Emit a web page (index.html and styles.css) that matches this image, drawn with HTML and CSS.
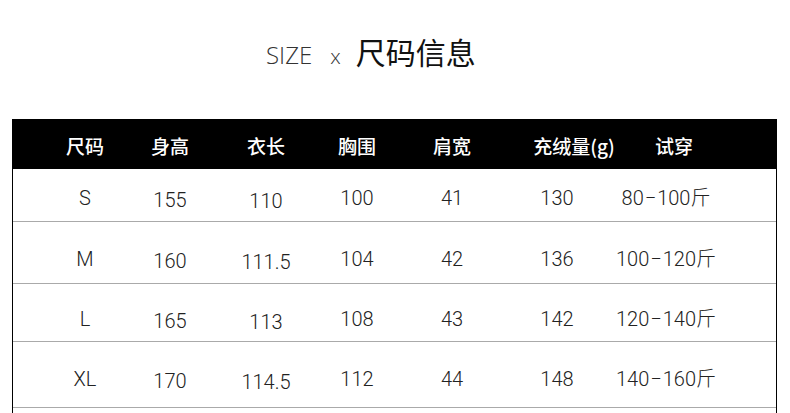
FILE: index.html
```html
<!DOCTYPE html>
<html lang="zh">
<head>
<meta charset="utf-8">
<link rel="stylesheet" href="styles.css">
</head>
<body>
<div class="title">
  <span class="t-en">SIZE</span>
  <span class="t-x">x</span>
  <span class="t-cn">尺码信息</span>
</div>
<div class="table">
  <div class="head grid">
    <div>尺码</div>
    <div>身高</div>
    <div>衣长</div>
    <div>胸围</div>
    <div>肩宽</div>
    <div class="h6">充绒量(g)</div>
    <div class="h7">试穿</div>
  </div>
  <div class="body">
    <div class="row grid r1">
      <div>S</div><div class="c2">155</div><div class="c3">110</div><div class="c4">100</div><div>41</div><div>130</div><div>80<span class="dash">−</span>100斤</div>
    </div>
    <div class="row grid r2">
      <div>M</div><div class="c2">160</div><div class="c3">111.5</div><div class="c4">104</div><div>42</div><div>136</div><div>100<span class="dash">−</span>120斤</div>
    </div>
    <div class="row grid r3">
      <div>L</div><div class="c2">165</div><div class="c3">113</div><div class="c4">108</div><div>43</div><div>142</div><div>120<span class="dash">−</span>140斤</div>
    </div>
    <div class="row grid r4">
      <div>XL</div><div class="c2">170</div><div class="c3">114.5</div><div class="c4">112</div><div>44</div><div>148</div><div>140<span class="dash">−</span>160斤</div>
    </div>
  </div>
</div>
</body>
</html>
```
FILE: styles.css
```css
html, body {
  margin: 0;
  padding: 0;
  background: #fff;
}
body {
  width: 790px;
  height: 413px;
  overflow: hidden;
}
.title {
  display: flex;
  align-items: baseline;
  padding-top: 36px;
  padding-left: 266px;
  height: 30px;
  line-height: 30px;
}
.t-en {
  font-family: "Open Sans", "Liberation Sans", sans-serif;
  font-weight: 300;
  font-size: 24px;
  color: #333;
}
.t-x {
  font-family: "Open Sans", "Liberation Sans", sans-serif;
  font-weight: 300;
  font-size: 21px;
  color: #333;
  margin-left: 18px;
}
.t-cn {
  font-family: "Noto Sans CJK SC", sans-serif;
  font-size: 30px;
  color: #111;
  margin-left: 15px;
}
.table {
  margin-top: 53px;
  margin-left: 12px;
  width: 765px;
}
.grid {
  display: grid;
  grid-template-columns: 84px 86px 106px 76px 114px 96px 122px;
  padding-left: 30px;
  justify-items: center;
  align-items: start;
  box-sizing: border-box;
}
.grid > div { white-space: nowrap; }
.head {
  background: #000;
  height: 50px;
  padding-top: 17px;
  color: #fff;
  font-family: "Noto Sans CJK SC", sans-serif;
  font-weight: 500;
  font-size: 19px;
  line-height: 19px;
  border-left: 1px solid #000;
}
.h6 { margin-left: 34px; }
.h7 { margin-left: 16px; }
.body {
  border-left: 1px solid #000;
  border-right: 1px solid #000;
  height: 245px;
}
.row {
  border-bottom: 1px solid #aaa;
  font-family: "Roboto", "Liberation Sans", "Noto Sans CJK SC", sans-serif;
  font-weight: 300;
  font-size: 20px;
  line-height: 20px;
  color: #222;
}
.dash { margin: 0 1px; }
.row > .c2 { padding-top: 2px; }
.row > .c3 { padding-top: 3px; }
.r1 { height: 53px; padding-top: 19px; }
.r2 { height: 62px; padding-top: 27px; }
.r3 { height: 58px; padding-top: 25px; }
.r4 { height: 66px; padding-top: 27px; }
```
